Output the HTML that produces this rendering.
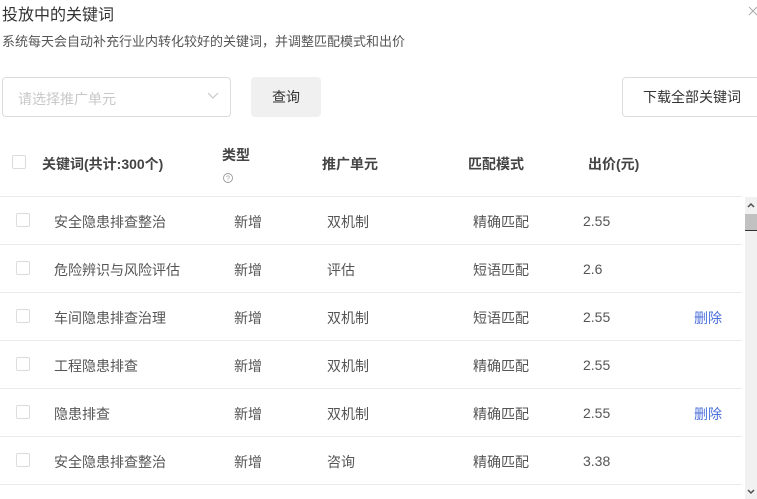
<!DOCTYPE html>
<html><head><meta charset="utf-8"><style>
*{margin:0;padding:0;box-sizing:border-box}
body{width:757px;height:499px;overflow:hidden;background:#fff;font-family:"Liberation Sans","Noto Sans CJK SC",sans-serif;color:#333;position:relative}
.a{position:absolute;white-space:nowrap}
.cb{position:absolute;width:14px;height:14px;border:1px solid #dcdcdc;border-radius:2px;background:#fff}
.line{position:absolute;left:0;width:742px;height:1px;background:#ebebeb}
.c{position:absolute;font-size:14px;color:#555;white-space:nowrap}
.n{margin-top:1px}
</style></head><body>
<div class="a" style="left:2px;top:1px;font-size:16px;color:#333">投放中的关键词</div>
<svg class="a" style="left:748px;top:6px" width="10" height="10"><path d="M1 1l8 8M9 1l-8 8" stroke="#aaa" stroke-width="1"/></svg>
<div class="a" style="left:2px;top:31px;font-size:13px;color:#555">系统每天会自动补充行业内转化较好的关键词，并调整匹配模式和出价</div>
<div class="a" style="left:2px;top:77px;width:229px;height:40px;border:1px solid #dcdcdc;border-radius:4px"></div>
<div class="a" style="left:18px;top:89px;font-size:14px;color:#c8c8c8">请选择推广单元</div>
<svg class="a" style="left:207px;top:92px" width="12" height="8"><path d="M1 1l5 5 5-5" fill="none" stroke="#c8c8c8" stroke-width="1.2"/></svg>
<div class="a" style="left:251px;top:77px;width:70px;height:40px;background:#f0f0f0;border-radius:4px;font-size:14px;color:#333;text-align:center;line-height:40px">查询</div>
<div class="a" style="left:622px;top:77px;width:140px;height:40px;border:1px solid #dcdcdc;border-radius:4px;font-size:14px;color:#333;padding-left:20px;line-height:38px">下载全部关键词</div>
<div class="cb" style="left:12px;top:155px"></div>
<div class="a" style="left:42px;top:154px;font-size:14px;font-weight:bold;color:#444">关键词(共计:300个)</div>
<div class="a" style="left:222px;top:145px;font-size:14px;font-weight:bold;color:#444">类型</div>
<svg class="a" style="left:222px;top:172px" width="12" height="12"><circle cx="6" cy="6" r="4.5" fill="none" stroke="#999" stroke-width="0.9"/><text x="6" y="8.5" font-size="7" text-anchor="middle" fill="#999" font-family="Liberation Sans">?</text></svg>
<div class="a" style="left:322px;top:154px;font-size:14px;font-weight:bold;color:#444">推广单元</div>
<div class="a" style="left:468px;top:154px;font-size:14px;font-weight:bold;color:#444">匹配模式</div>
<div class="a" style="left:588px;top:154px;font-size:14px;font-weight:bold;color:#444">出价(元)</div>
<div class="line" style="top:196px"></div>

<div class="cb" style="left:16px;top:213px"></div><div class="c" style="left:54px;top:212px">安全隐患排查整治</div><div class="c" style="left:234px;top:212px">新增</div><div class="c" style="left:327px;top:212px">双机制</div><div class="c" style="left:473px;top:212px">精确匹配</div><div class="c n" style="left:583px;top:212px">2.55</div>
<div class="line" style="top:244px"></div>
<div class="cb" style="left:16px;top:261px"></div><div class="c" style="left:54px;top:260px">危险辨识与风险评估</div><div class="c" style="left:234px;top:260px">新增</div><div class="c" style="left:327px;top:260px">评估</div><div class="c" style="left:473px;top:260px">短语匹配</div><div class="c n" style="left:583px;top:260px">2.6</div>
<div class="line" style="top:292px"></div>
<div class="cb" style="left:16px;top:309px"></div><div class="c" style="left:54px;top:308px">车间隐患排查治理</div><div class="c" style="left:234px;top:308px">新增</div><div class="c" style="left:327px;top:308px">双机制</div><div class="c" style="left:473px;top:308px">短语匹配</div><div class="c n" style="left:583px;top:308px">2.55</div><div class="c" style="left:694px;top:308px;color:#4a6fd8">删除</div>
<div class="line" style="top:340px"></div>
<div class="cb" style="left:16px;top:357px"></div><div class="c" style="left:54px;top:356px">工程隐患排查</div><div class="c" style="left:234px;top:356px">新增</div><div class="c" style="left:327px;top:356px">双机制</div><div class="c" style="left:473px;top:356px">精确匹配</div><div class="c n" style="left:583px;top:356px">2.55</div>
<div class="line" style="top:388px"></div>
<div class="cb" style="left:16px;top:405px"></div><div class="c" style="left:54px;top:404px">隐患排查</div><div class="c" style="left:234px;top:404px">新增</div><div class="c" style="left:327px;top:404px">双机制</div><div class="c" style="left:473px;top:404px">精确匹配</div><div class="c n" style="left:583px;top:404px">2.55</div><div class="c" style="left:694px;top:404px;color:#4a6fd8">删除</div>
<div class="line" style="top:436px"></div>
<div class="cb" style="left:16px;top:453px"></div><div class="c" style="left:54px;top:452px">安全隐患排查整治</div><div class="c" style="left:234px;top:452px">新增</div><div class="c" style="left:327px;top:452px">咨询</div><div class="c" style="left:473px;top:452px">精确匹配</div><div class="c n" style="left:583px;top:452px">3.38</div>
<div class="line" style="top:484px"></div>

<div class="a" style="left:745px;top:197px;width:12px;height:302px;background:#f1f1f1"></div>
<svg class="a" style="left:746px;top:201px" width="10" height="8"><path d="M2 6l3-3 3 3" fill="none" stroke="#505050" stroke-width="1.5"/></svg>
<div class="a" style="left:745px;top:214px;width:12px;height:17px;background:#c1c1c1;border-bottom:1px solid #333"></div>
<svg class="a" style="left:746px;top:488px" width="10" height="8"><path d="M2 2l3 3 3-3" fill="none" stroke="#505050" stroke-width="1.5"/></svg>
</body></html>
